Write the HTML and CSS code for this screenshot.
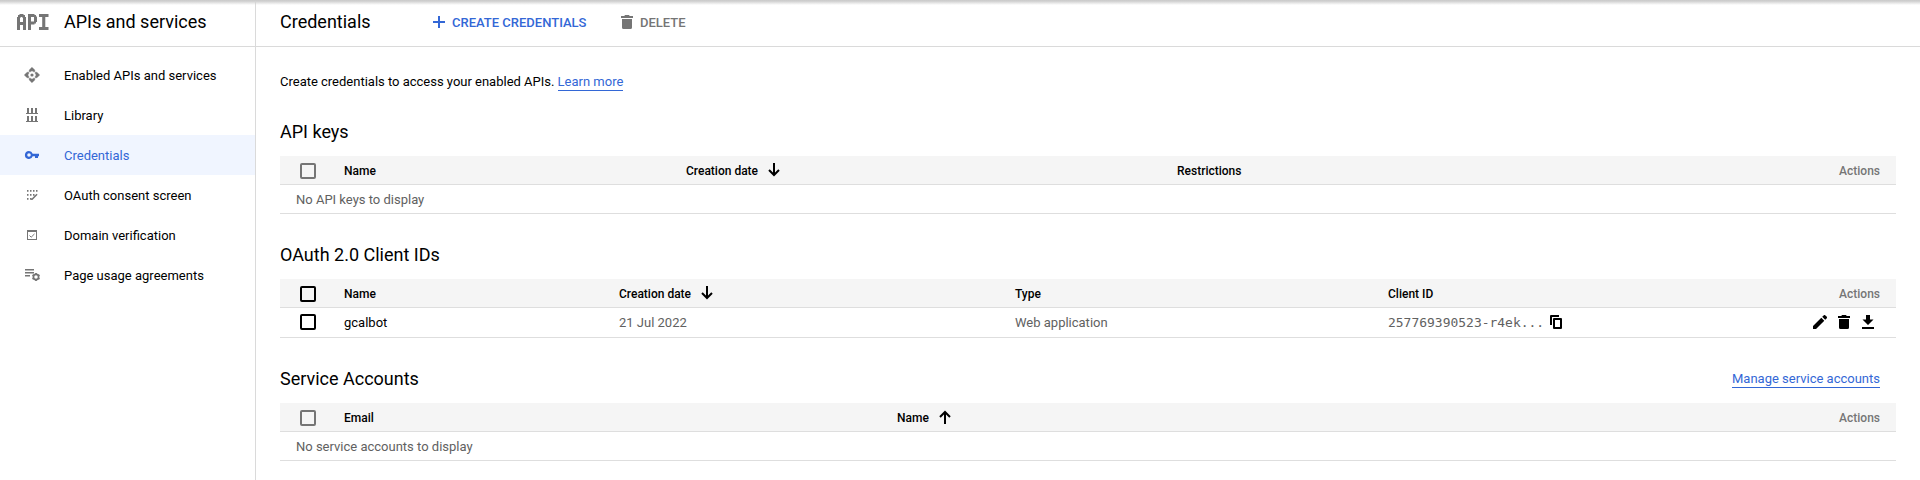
FILE: index.html
```html
<!DOCTYPE html>
<html lang="en">
<head>
<meta charset="utf-8">
<title>Credentials – APIs and services</title>
<link rel="stylesheet" href="styles.css">
</head>
<body>
<div class="app">
  <aside class="sidebar">
    <header class="product">
      <svg class="product-logo" width="32" height="17" viewBox="0 0 32 17"><path fill-rule="evenodd" d="M0 16V3h1V1h1.500V0h4v1H8v2h1v13H6v-5H3v5zM3 4v4h3V4L5 3H4zM11 0h6.500v1H19v1.500h1V8h-1v1.500h-1.500v1H14V16h-3zM14 3v4.500h3V3zM22 0h9.500v3H28.300v10h3.200v3H22v-3h3.200V3H22z"/></svg>
      <span class="product-name">APIs and services</span>
    </header>
    <nav class="nav">
      <a class="nav-item"><svg class="nav-icon" viewBox="0 0 16 16"><path d="M8 .3l2.800 2.800v1.700H9.600L8 3.800 6.400 4.800H5.200V3.100zM8 15.700l2.800-2.800v-1.700H9.600L8 12.200l-1.600-1H5.200v1.700zM.3 8l2.800-2.800h1.700v1.200L3.800 8l1 1.600v1.200H3.100zM15.700 8l-2.800-2.800h-1.700v1.200l1 1.600-1 1.600v1.200h1.700z" stroke="currentColor" stroke-width=".4"/><circle cx="8" cy="8" r="1.600"/></svg>Enabled APIs and services</a>
      <a class="nav-item"><svg class="nav-icon" viewBox="0 0 16 16"><path d="M3 1h2v5h2V1h2v5h2V1h2v5h1v1H2V6h1zM3 9h2v5h2V9h2v5h2V9h2v5h1v1H2v-1h1z"/></svg>Library</a>
      <a class="nav-item active"><svg class="nav-icon" viewBox="0 0 16 16"><path fill-rule="evenodd" d="M5 4a4 4 0 1 0 3.700 5.300H11V11h3V9.300h1V6.700H8.700A4 4 0 0 0 5 4zm0 2.200a1.800 1.800 0 1 1 0 3.600 1.800 1.800 0 0 1 0-3.600z"/></svg>Credentials</a>
      <a class="nav-item"><svg class="nav-icon" viewBox="0 0 16 16"><path d="M3 3h1.500v1.700H3zM6 3h1.500v1.700H6zM9 3h1.500v1.700H9zM12 3h1.500v1.700H12zM3 7h1.500v1.700H3zM6 7h1.500v1.700H6zM9 7h1.500v1.700H9zM3 11h1.500v1.700H3zM6 11h1.500v1.700H6zM12.500 6.700l1.100 1.100-5.200 5.200H7.300v-1.100z"/></svg>OAuth consent screen</a>
      <a class="nav-item"><svg class="nav-icon" viewBox="0 0 16 16"><path fill-rule="evenodd" d="M3 3h10v10H3zM4 5v7h8V5z"/><path d="M5.500 8.500l1.700 1.700 3.300-3.300" fill="none" stroke="currentColor"/></svg>Domain verification</a>
      <a class="nav-item"><svg class="nav-icon" viewBox="0 0 16 16"><path d="M1 2h9v1.500H1zM1 5h9v1.500H1zM1 8h5v1.500H1z"/><circle cx="12" cy="10" r="2.600" fill="none" stroke="currentColor" stroke-width="1.700"/><path d="M12 6v1.500M12 12.500V14M8.500 8l1.300.8M14.200 11.200l1.300.8M8.500 12l1.300-.8M14.200 8.800l1.300-.8" stroke="currentColor" stroke-width="1.800"/></svg>Page usage agreements</a>
    </nav>
  </aside>
  <div class="page">
    <header class="toolbar">
      <h1 class="page-title">Credentials</h1>
      <button class="action create"><svg width="12" height="12" viewBox="0 0 12 12"><path d="M5 0h2v5h5v2H7v5H5V7H0V5h5z"/></svg>CREATE CREDENTIALS</button>
      <button class="action delete"><svg width="12" height="14" viewBox="0 0 12 14"><path d="M4 0h4l.7 1H12v2H0V1h3.300zM1 4h10v8.500a1.500 1.500 0 0 1-1.500 1.500h-7A1.500 1.500 0 0 1 1 12.500z"/></svg>DELETE</button>
    </header>
    <main class="content">
      <p class="intro">Create credentials to access your enabled APIs. <a class="link">Learn more</a></p>

      <section class="section">
        <div class="section-head"><h2>API keys</h2></div>
        <div class="row head keys">
          <span class="box muted"></span><span>Name</span>
          <span class="sort">Creation date <svg width="12" height="14" viewBox="0 0 12 14"><path d="M6 0v12M1 7l5 5 5-5"/></svg></span>
          <span>Restrictions</span><span class="actions-label">Actions</span>
        </div>
        <div class="row empty">No API keys to display</div>
      </section>

      <section class="section">
        <div class="section-head"><h2>OAuth 2.0 Client IDs</h2></div>
        <div class="row head clients">
          <span class="box"></span><span>Name</span>
          <span class="sort">Creation date <svg width="12" height="14" viewBox="0 0 12 14"><path d="M6 0v12M1 7l5 5 5-5"/></svg></span>
          <span>Type</span><span>Client ID</span><span class="actions-label">Actions</span>
        </div>
        <div class="row data clients">
          <span class="box"></span><span class="name">gcalbot</span><span>21 Jul 2022</span><span>Web application</span>
          <span class="client-id"><span class="mono">257769390523-r4ek...</span><svg width="12" height="14" viewBox="0 0 12 14"><path fill-rule="evenodd" d="M0 1a1 1 0 0 1 1-1h8v2H2v8H0zM3 4a1 1 0 0 1 1-1h7a1 1 0 0 1 1 1v9a1 1 0 0 1-1 1H4a1 1 0 0 1-1-1zM5 5v7h5V5z"/></svg></span>
          <span class="row-actions">
            <svg width="14" height="14" viewBox="0 0 14 14"><path d="M0 11L8.300 2.700l3 3L3 14H0zM9.200 1.800L10.600.4a1.300 1.300 0 0 1 1.800 0l1.200 1.200a1.300 1.300 0 0 1 0 1.800L12.200 4.800z"/></svg>
            <svg width="12" height="14" viewBox="0 0 12 14"><path d="M4 0h4l.7 1H12v2H0V1h3.300zM1 4h10v8.500a1.500 1.500 0 0 1-1.500 1.500h-7A1.500 1.500 0 0 1 1 12.500z"/></svg>
            <svg width="12" height="14" viewBox="0 0 12 14"><path d="M4 0h4v4.500h3.500L6 10 .5 4.500H4zM0 12h12v2H0z"/></svg>
          </span>
        </div>
      </section>

      <section class="section">
        <div class="section-head"><h2>Service Accounts</h2><a class="link">Manage service accounts</a></div>
        <div class="row head accounts">
          <span class="box muted"></span><span>Email</span>
          <span class="sort">Name <svg width="12" height="14" viewBox="0 0 12 14"><path d="M6 14V2M1 7l5-5 5 5"/></svg></span>
          <span class="actions-label">Actions</span>
        </div>
        <div class="row empty">No service accounts to display</div>
      </section>
    </main>
  </div>
</div>
</body>
</html>
```

FILE: styles.css
```css
* { box-sizing: border-box; }
body {
  margin: 0;
  height: 480px;
  overflow: hidden;
  background: #fff;
  color: rgba(0, 0, 0, .87);
  font: 13px/20px Roboto, "Liberation Sans", sans-serif;
}
body::before {
  content: "";
  position: absolute;
  inset: 0 0 auto;
  height: 5px;
  background: linear-gradient(#c9c9c9, #d4d4d4 30%, rgba(255, 255, 255, 0));
}
h1, h2, p { margin: 0; font-weight: 400; }
svg { flex: none; display: block; fill: currentColor; }
.app { display: flex; height: 480px; }
.sidebar { width: 256px; flex: none; border-right: 1px solid #dadada; }
.product, .toolbar { display: flex; align-items: center; height: 47px; border-bottom: 1px solid #dadada; padding-bottom: 2px; }
.product { padding-left: 17px; }
.product-logo { color: #757575; }
.product-name { margin-left: 15px; font-size: 18px; color: #000; }
.nav { padding-top: 8px; }
.nav-item { display: flex; align-items: center; height: 40px; padding: 2px 0 0 24px; gap: 24px; color: #000; }
.nav-icon { width: 16px; height: 16px; margin-bottom: 2px; color: #757575; }
.nav-item.active { background: #f0f5ff; color: #3367d6; }
.active .nav-icon { color: #3367d6; }
.page { flex: 1; min-width: 0; }
.toolbar { padding-left: 24px; }
.page-title { width: 153px; font-size: 18px; color: #000; }
.action { display: flex; align-items: center; gap: 7px; padding: 2px 0 0; border: 0; background: none; font: 500 13px/20px Roboto, sans-serif; }
.action svg { margin-bottom: 2px; }
.create svg { margin-bottom: 2px; }
.create { width: 188px; color: #3367d6; }
.delete { color: #757575; }
.content { padding: 24px 24px 0; color: #000; }
.intro { height: 39px; padding-top: 1px; word-spacing: -.05px; }
.link { display: inline-block; line-height: 17px; color: #3367d6; border-bottom: 1px solid #3367d6; }
.section-head { display: flex; justify-content: space-between; height: 46px; padding: 11px 16px 0 0; }
.section-head .link { height: 18px; margin-top: 2px; }
.section-head h2 { font-size: 18px; line-height: 22px; }
.section + .section { padding-top: 19px; }
.row { display: grid; align-items: center; height: 29px; border-bottom: 1px solid #dedede; padding: 2px 16px 0 20px; color: #616161; }
.head { background: #f5f5f5; font-size: 12px; font-weight: 500; color: #000; }
.keys { grid-template-columns: 44px 342px 491px 1fr auto; }
.clients { grid-template-columns: 44px 275px 396px 373px 1fr auto; }
.accounts { grid-template-columns: 44px 553px 1fr auto; }
.row.empty { padding-left: 16px; }
.row.data { height: 30px; padding-top: 0; }
.data .box { margin-bottom: 1px; }
.name { color: #000; }
.actions-label { color: #757575; }
.box { width: 16px; height: 16px; border: 2px solid #000; border-radius: 2px; }
.box.muted { border-color: #757575; }
.sort { display: flex; align-items: center; gap: 10px; }
.sort svg { margin-bottom: 2px; fill: none; stroke: #000; stroke-width: 2; }
.client-id { display: flex; align-items: center; color: #000; }
.client-id svg { margin-bottom: 1px; }
.mono { width: 162px; font: 12.98px/20px "DejaVu Sans Mono", monospace; color: #616161; }
.row-actions { display: flex; align-items: center; gap: 12px; padding: 0 6px 1px 0; color: #000; }
.row-actions svg:first-child { margin-right: -1px; }
```
